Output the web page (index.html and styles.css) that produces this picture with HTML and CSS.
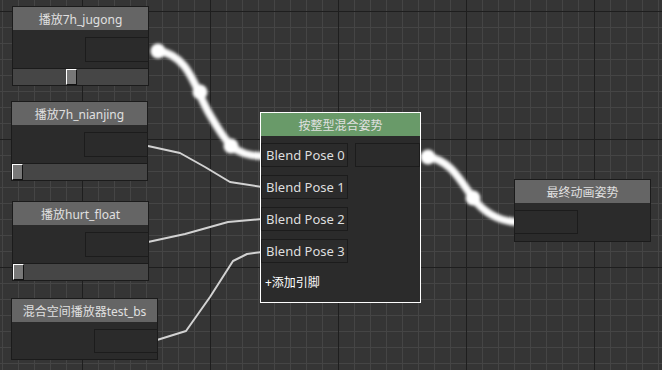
FILE: index.html
```html
<!DOCTYPE html>
<html>
<head>
<meta charset="utf-8">
<link rel="stylesheet" href="styles.css">
</head>
<body>
<div class="canvas">
  <svg class="wires" width="662" height="370" viewBox="0 0 662 370">
    <defs>
      <filter id="glow" x="-20%" y="-20%" width="140%" height="140%">
        <feGaussianBlur stdDeviation="1.6"/>
      </filter>
    </defs>
    <g fill="none" stroke="#d2d2d2" stroke-width="2" stroke-linejoin="round">
      <polyline points="148,146 180,153 205,167 230,182 262,187"/>
      <polyline points="148,242 185,234 228,222 262,219"/>
      <polyline points="157,340 186,331 210,297 233,261 247,254 262,252"/>
    </g>
    <g filter="url(#glow)">
      <path d="M158 51 C190 55 195 90 210 115 C225 140 232 156 262 156" fill="none" stroke="#e8e8e8" stroke-width="8" stroke-linecap="round"/>
      <path d="M428 157 C450 160 460 180 473 198 C485 214 500 221 516 222" fill="none" stroke="#e8e8e8" stroke-width="8" stroke-linecap="round"/>
      <path d="M158 51 C190 55 195 90 210 115 C225 140 232 156 262 156" fill="none" stroke="#ffffff" stroke-width="4" stroke-linecap="round"/>
      <path d="M428 157 C450 160 460 180 473 198 C485 214 500 221 516 222" fill="none" stroke="#ffffff" stroke-width="4" stroke-linecap="round"/>
      <circle cx="158" cy="51" r="7.5" fill="#fff"/>
      <circle cx="200" cy="92" r="7.5" fill="#fff"/>
      <circle cx="231" cy="146" r="7.5" fill="#fff"/>
      <circle cx="428" cy="157" r="7.5" fill="#fff"/>
      <circle cx="473" cy="198" r="7.5" fill="#fff"/>
    </g>
  </svg>

  <div class="node n1">
    <div class="head">播放7h_jugong</div>
    <div class="body"><div class="out"></div></div>
    <div class="slider"><div class="handle" style="margin-left:53px"></div></div>
  </div>

  <div class="node n2">
    <div class="head">播放7h_nianjing</div>
    <div class="body"><div class="out"></div></div>
    <div class="slider"><div class="handle" style="margin-left:0px"></div></div>
  </div>

  <div class="node n3">
    <div class="head">播放hurt_float</div>
    <div class="body"><div class="out"></div></div>
    <div class="slider"><div class="handle" style="margin-left:0px"></div></div>
  </div>

  <div class="node n4">
    <div class="head">混合空间播放器test_bs</div>
    <div class="body short"><div class="out small"></div></div>
  </div>

  <div class="node blend">
    <div class="head green">按整型混合姿势</div>
    <div class="rows">
      <div class="row"><div class="pin">Blend Pose 0</div><div class="pout"></div></div>
      <div class="row"><div class="pin">Blend Pose 1</div></div>
      <div class="row"><div class="pin">Blend Pose 2</div></div>
      <div class="row"><div class="pin">Blend Pose 3</div></div>
    </div>
    <div class="add">+添加引脚</div>
  </div>

  <div class="node final">
    <div class="head">最终动画姿势</div>
    <div class="body left"><div class="in"></div></div>
  </div>
</div>
</body>
</html>
```

FILE: styles.css
```css
html, body {
  margin: 0;
  padding: 0;
}
body {
  width: 662px;
  height: 370px;
  overflow: hidden;
  font-family: "Noto Sans", "Noto Sans CJK SC", sans-serif;
}
.canvas {
  position: relative;
  width: 662px;
  height: 370px;
  overflow: hidden;
  background-color: #353535;
  background-image:
    linear-gradient(to right, #1e1e1e 1px, transparent 1px),
    linear-gradient(to bottom, #1e1e1e 1px, transparent 1px),
    linear-gradient(to right, #454545 1px, transparent 1px),
    linear-gradient(to bottom, #454545 1px, transparent 1px);
  background-size: 128px 128px, 128px 128px, 16px 16px, 16px 16px;
  background-position: 82px 11px, 82px 11px, 2px 11px, 2px 11px;
}
.wires {
  position: absolute;
  left: 0;
  top: 0;
}
.node {
  position: absolute;
  box-sizing: border-box;
  border: 1px solid #1b1b1b;
  background: #2b2b2b;
  display: flex;
  flex-direction: column;
}
.n1 { left: 12px; top: 6px; width: 137px; height: 80px; }
.n2 { left: 11px; top: 101px; width: 137px; height: 80px; }
.n3 { left: 12px; top: 201px; width: 137px; height: 80px; }
.n4 { left: 11px; top: 298px; width: 147px; height: 62px; }
.blend { left: 260px; top: 112px; width: 161px; height: 191px; border-color: #ffffff; }
.final { left: 514px; top: 179px; width: 137px; height: 63px; }

.head {
  flex: none;
  height: 23px;
  background: #656565;
  color: #e0e0e0;
  font-size: 12px;
  display: flex;
  align-items: center;
  justify-content: center;
  white-space: nowrap;
}
.head.green {
  background: #699a69;
}
.body {
  flex: none;
  height: 38px;
  box-sizing: border-box;
  padding-top: 7px;
  display: flex;
  justify-content: flex-end;
  align-items: flex-start;
}
.body.short { height: 37px; }
.body.left { justify-content: flex-start; }
.out, .in {
  width: 64px;
  height: 25px;
  box-sizing: border-box;
  border: 1px solid #1c1c1c;
  background: #2b2b2b;
  margin-right: -1px;
}
.out.small { height: 24px; }
.in {
  height: 24px;
  margin-right: 0;
  margin-left: -1px;
}
.slider {
  flex: none;
  height: 17px;
  box-sizing: border-box;
  border-top: 1px solid #1b1b1b;
  background: #464646;
  display: flex;
  align-items: flex-start;
}
.handle {
  width: 11px;
  height: 16px;
  box-sizing: border-box;
  background: #787878;
  border-left: 1px solid #ffffff;
  border-top: 1px solid #ffffff;
  border-right: 1px solid #111111;
  border-bottom: 1px solid #111111;
}
.rows {
  display: flex;
  flex-direction: column;
  gap: 8px;
  padding-top: 7px;
}
.row {
  height: 24px;
  display: flex;
  justify-content: space-between;
}
.pin {
  width: 87px;
  height: 24px;
  box-sizing: border-box;
  border: 1px solid #1c1c1c;
  color: #dedede;
  font-size: 13px;
  padding-left: 4px;
  display: flex;
  align-items: center;
  white-space: nowrap;
}
.pout {
  width: 65px;
  height: 24px;
  box-sizing: border-box;
  border: 1px solid #1c1c1c;
}
.add {
  color: #ffffff;
  font-size: 12px;
  line-height: 16px;
  padding-left: 4px;
  margin-top: 12px;
}
```
